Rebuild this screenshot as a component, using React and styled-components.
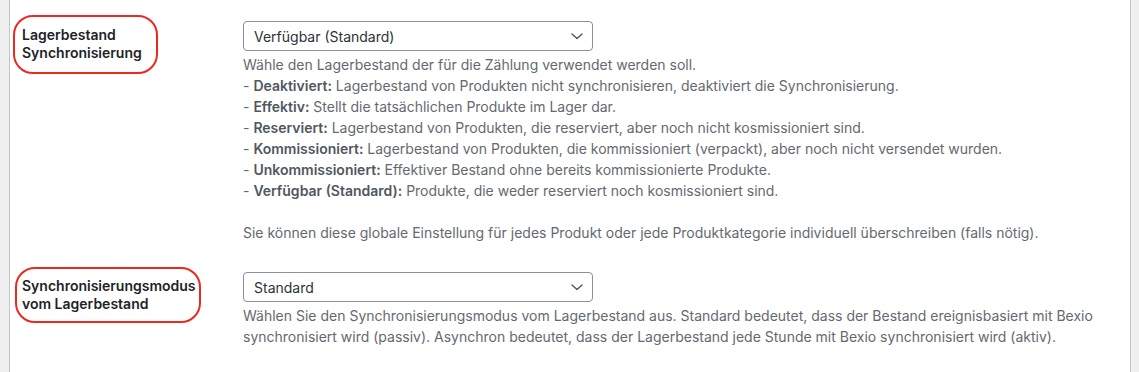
import React from 'react'
import styled, { createGlobalStyle } from 'styled-components'

const GlobalStyle = createGlobalStyle`
  html, body {
    margin: 0;
    padding: 0;
    background: #f0f0f1;
  }
  body {
    font-family: Inter, "Liberation Sans", sans-serif;
    -webkit-font-smoothing: antialiased;
  }
`

const settings = [
  {
    label: ['Lagerbestand', 'Synchronisierung'],
    mark: { left: -9, top: -11, width: 145, height: 59 },
    value: 'Verfügbar (Standard)',
    description: (
      <>
        Wähle den Lagerbestand der für die Zählung verwendet werden soll.
        <br />- <strong>Deaktiviert:</strong> Lagerbestand von Produkten nicht synchronisieren, deaktiviert die Synchronisierung.
        <br />- <strong>Effektiv:</strong> Stellt die tatsächlichen Produkte im Lager dar.
        <br />- <strong>Reserviert:</strong> Lagerbestand von Produkten, die reserviert, aber noch nicht kosmissioniert sind.
        <br />- <strong>Kommissioniert:</strong> Lagerbestand von Produkten, die kommissioniert (verpackt), aber noch nicht versendet wurden.
        <br />- <strong>Unkommissioniert:</strong> Effektiver Bestand ohne bereits kommissionierte Produkte.
        <br />- <strong>Verfügbar (Standard):</strong> Produkte, die weder reserviert noch kosmissioniert sind.
        <br />
        <br />Sie können diese globale Einstellung für jedes Produkt oder jede Produktkategorie individuell überschreiben (falls nötig).
      </>
    ),
  },
  {
    label: ['Synchronisierungsmodus', 'vom Lagerbestand'],
    mark: { left: -7, top: -10, width: 186, height: 56 },
    value: 'Standard',
    description: (
      <>
        Wählen Sie den Synchronisierungsmodus vom Lagerbestand aus. Standard bedeutet, dass der Bestand ereignisbasiert mit Bexio
        <br />synchronisiert wird (passiv). Asynchron bedeutet, dass der Lagerbestand jede Stunde mit Bexio synchronisiert wird (aktiv).
      </>
    ),
  },
]

const Chevron = () => (
  <svg width="16" height="16" viewBox="0 0 16 16" fill="none">
    <path d="M3 6l5 4.5L13 6" stroke="#50575e" strokeWidth="1.4" strokeLinecap="round" strokeLinejoin="round" />
  </svg>
)

export default function App() {
  return (
    <>
      <GlobalStyle />
      <Panel>
        {settings.map((s) => (
          <Row key={s.value}>
            <LabelCell>
              <Label $mark={s.mark}>
                {s.label[0]}
                <br />
                {s.label[1]}
              </Label>
            </LabelCell>
            <FieldCell>
              <Select>
                <span>{s.value}</span>
                <Chevron />
              </Select>
              <Description>{s.description}</Description>
            </FieldCell>
          </Row>
        ))}
      </Panel>
    </>
  )
}

const Panel = styled.div`
  margin: 0 8px 0 9px;
  min-height: 372px;
  box-sizing: border-box;
  padding: 6px 12px 0;
  background: #fff;
  border-left: 1px solid #c3c4c7;
  border-right: 1px solid #c3c4c7;
`

const Row = styled.div`
  display: flex;
  align-items: flex-start;

  & + & {
    margin-top: -1px;
  }
`

const LabelCell = styled.div`
  width: 200px;
  flex: none;
  padding: 20px 10px 20px 0;
`

const Label = styled.div`
  position: relative;
  display: inline-block;
  font-size: 14px;
  font-weight: 600;
  line-height: 1.3;
  color: #1d2327;

  &::before {
    content: '';
    position: absolute;
    left: ${(p) => p.$mark.left}px;
    top: ${(p) => p.$mark.top}px;
    width: ${(p) => p.$mark.width}px;
    height: ${(p) => p.$mark.height}px;
    box-sizing: border-box;
    border: 2px solid #ea2a1e;
    border-radius: 20px;
  }
`

const FieldCell = styled.div`
  flex: 1;
  padding: 15px 10px 15px 11px;
`

const Select = styled.div`
  width: 350px;
  height: 30px;
  box-sizing: border-box;
  display: flex;
  align-items: center;
  justify-content: space-between;
  padding: 0 7px 0 10px;
  border: 1px solid #8c8f94;
  border-radius: 4px;
  background: #fff;
  font-size: 14px;
  color: #2c3338;
`

const Description = styled.p`
  margin: 3px 0 0;
  font-size: 14px;
  line-height: 1.5;
  color: #646970;
  white-space: nowrap;

  strong {
    font-weight: 600;
    color: #50575e;
  }
`
